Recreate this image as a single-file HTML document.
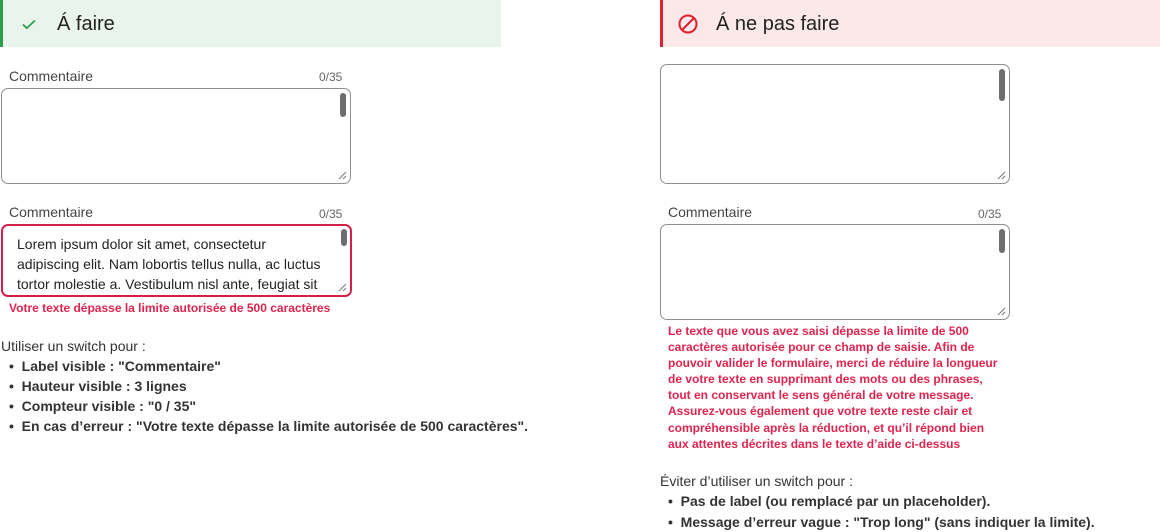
<!DOCTYPE html>
<html><head><meta charset="utf-8"><style>
*{margin:0;padding:0;box-sizing:border-box}
body{width:1160px;height:532px;background:#fff;font-family:"Liberation Sans",Arial,sans-serif;position:relative;overflow:hidden;color:#333}
.a{position:absolute;white-space:nowrap}
.hdr{position:absolute;top:0;height:47px}
.ta{position:absolute;border:1px solid #8f8f8f;border-radius:7px;background:#fff}
.sb{position:absolute;right:4px;top:4px;width:6px;height:24px;border-radius:3px;background:#6e6e6e}
.rs{position:absolute;right:3px;bottom:3px;width:9px;height:9px}
.lbl{font-size:14px;color:#444}
.cnt{font-size:12px;color:#666}
.err{font-size:12px;font-weight:bold;color:#e0244e}
.li{font-size:14px;font-weight:bold;color:#333}
</style></head><body>
<div class="hdr" style="left:0;width:501px;background:#e8f4ec;border-left:3px solid #2d9e4e"></div>
<svg class="a" style="left:21px;top:16px" width="16" height="16" viewBox="0 0 16 16"><path d="M2 8.5l3.8 3.6L14 4.5" fill="none" stroke="#2d9e4e" stroke-width="1.8"/></svg>
<div class="a" style="left:57px;top:13px;font-size:20px;color:#222">Á faire</div>

<div class="hdr" style="left:660px;width:500px;background:#fbe8e9;border-left:3px solid #e0202e"></div>
<svg class="a" style="left:677px;top:13px" width="22" height="22" viewBox="0 0 22 22"><circle cx="11" cy="11" r="8.5" fill="none" stroke="#e0202e" stroke-width="2"/><path d="M5 17L17 5" stroke="#e0202e" stroke-width="2"/></svg>
<div class="a" style="left:716px;top:13px;font-size:20px;color:#222">Á ne pas faire</div>

<div class="a lbl" style="left:9px;top:68px">Commentaire</div>
<div class="a cnt" style="left:319px;top:70px">0/35</div>
<div class="ta" style="left:1px;top:88px;width:350px;height:96px"><div class="sb"></div><svg class="rs" viewBox="0 0 9 9"><path d="M1 8L8 1M5 8L8 5" stroke="#777" stroke-width="1"/></svg></div>

<div class="a lbl" style="left:9px;top:204px">Commentaire</div>
<div class="a cnt" style="left:319px;top:207px">0/35</div>
<div class="ta" style="left:1px;top:224px;width:351px;height:73px;border:2px solid #d41f4b;overflow:hidden"><div class="sb" style="top:3px;height:17px;right:3px"></div><svg class="rs" viewBox="0 0 9 9"><path d="M1 8L8 1M5 8L8 5" stroke="#777" stroke-width="1"/></svg>
<div style="position:absolute;left:14px;top:8px;font-size:14px;line-height:20px;color:#222;white-space:nowrap">Lorem ipsum dolor sit amet, consectetur<br>adipiscing elit. Nam lobortis tellus nulla, ac luctus<br>tortor molestie a. Vestibulum nisl ante, feugiat sit</div></div>
<div class="a err" style="left:9px;top:301px">Votre texte dépasse la limite autorisée de 500 caractères</div>

<div class="a" style="left:1px;top:338px;font-size:14px;color:#333">Utiliser un switch pour :</div>
<div class="a li" style="left:9px;top:358px">•&nbsp; Label visible : "Commentaire"</div>
<div class="a li" style="left:9px;top:378px">•&nbsp; Hauteur visible : 3 lignes</div>
<div class="a li" style="left:9px;top:398px">•&nbsp; Compteur visible : "0 / 35"</div>
<div class="a li" style="left:9px;top:418px">•&nbsp; En cas d’erreur : "Votre texte dépasse la limite autorisée de 500 caractères".</div>

<div class="ta" style="left:660px;top:64px;width:350px;height:120px"><div class="sb" style="height:32px"></div><svg class="rs" viewBox="0 0 9 9"><path d="M1 8L8 1M5 8L8 5" stroke="#777" stroke-width="1"/></svg></div>
<div class="a lbl" style="left:668px;top:204px">Commentaire</div>
<div class="a cnt" style="left:978px;top:207px">0/35</div>
<div class="ta" style="left:660px;top:224px;width:350px;height:96px"><div class="sb"></div><svg class="rs" viewBox="0 0 9 9"><path d="M1 8L8 1M5 8L8 5" stroke="#777" stroke-width="1"/></svg></div>
<div class="a err" style="left:668px;top:323px;line-height:16.1px">Le texte que vous avez saisi dépasse la limite de 500<br>caractères autorisée pour ce champ de saisie. Afin de<br>pouvoir valider le formulaire, merci de réduire la longueur<br>de votre texte en supprimant des mots ou des phrases,<br>tout en conservant le sens général de votre message.<br>Assurez-vous également que votre texte reste clair et<br>compréhensible après la réduction, et qu’il répond bien<br>aux attentes décrites dans le texte d’aide ci-dessus</div>

<div class="a" style="left:660px;top:473px;font-size:14px;color:#333">Éviter d’utiliser un switch pour :</div>
<div class="a li" style="left:668px;top:493px">•&nbsp; Pas de label (ou remplacé par un placeholder).</div>
<div class="a li" style="left:668px;top:514px">•&nbsp; Message d’erreur vague : "Trop long" (sans indiquer la limite).</div>
</body></html>
